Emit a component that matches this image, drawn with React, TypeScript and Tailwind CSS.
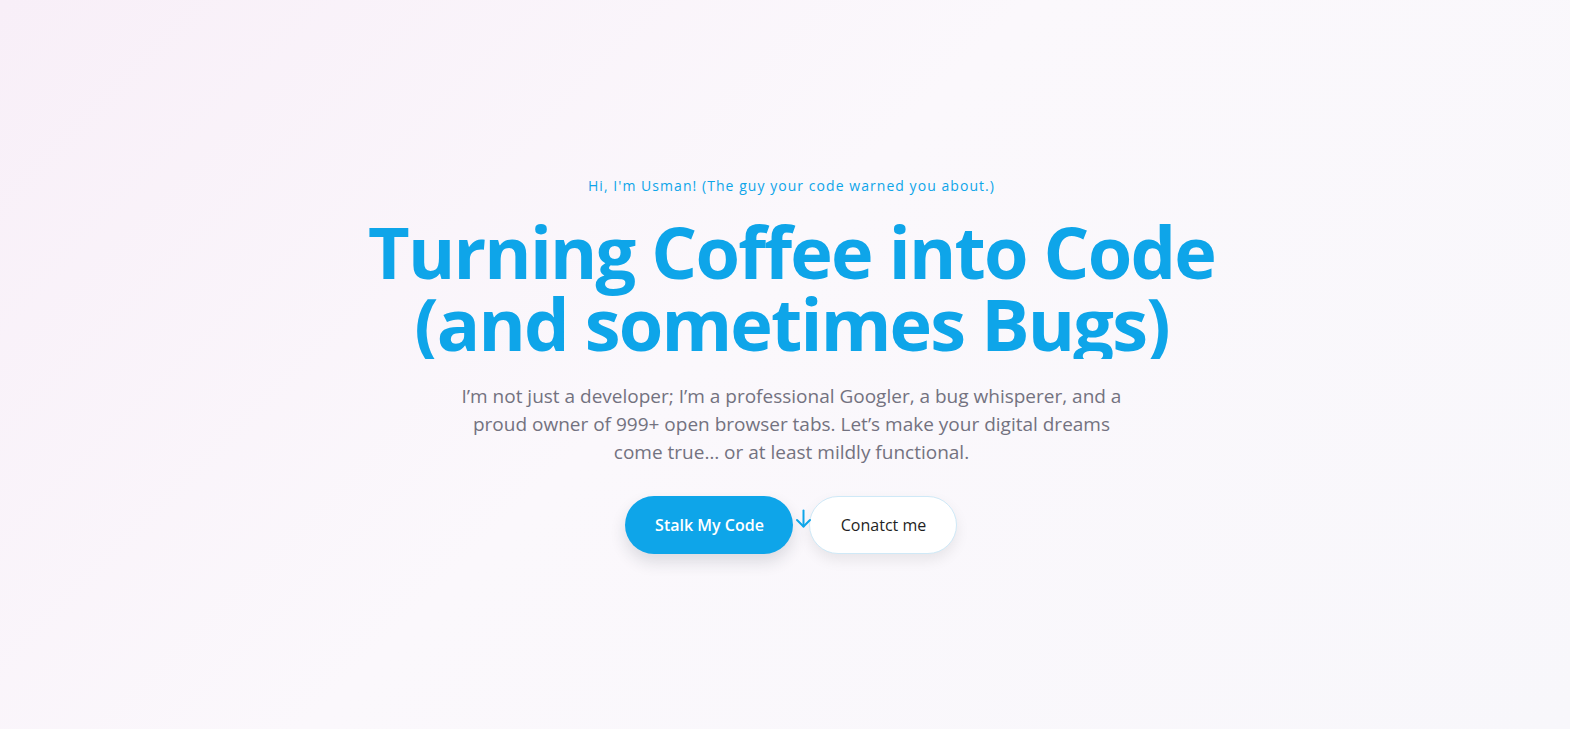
export default function App() {
  return (
    <div
      className="min-h-screen w-full flex flex-col items-center justify-center pl-[13px] bg-[linear-gradient(135deg,#f8eff8_0%,#fbf8fc_45%,#f8f7fb_100%)]"
      style={{ fontFamily: '"Open Sans", "Noto Sans", sans-serif' }}
    >
      <div className="flex flex-col items-center text-center">
        <p className="text-[14px] leading-5 tracking-[0.075em] text-[#0ea5e9] mb-[19px]">
          Hi, I'm Usman! (The guy your code warned you about.)
        </p>
        <h1 className="text-[72px] leading-[72px] font-bold text-[#0ea5e9] tracking-[-0.025em] h-[144px] overflow-hidden">
          Turning Coffee into Code
          <br />
          (and sometimes Bugs)
        </h1>
        <p className="mt-[23px] max-w-[672px] text-[19px] leading-[28px] text-[#737280]">
          I’m not just a developer; I’m a professional Googler, a bug whisperer, and a proud owner of 999+ open browser tabs. Let’s make your digital dreams come true… or at least mildly functional.
        </p>
        <div className="relative mt-[30px] flex items-center gap-4">
          <button className="h-[58px] w-[168px] rounded-full bg-[#0ea5e9] text-white text-[16px] font-semibold shadow-[0_8px_16px_rgba(30,40,60,0.14)]">
            Stalk My Code
          </button>
          <svg
            className="absolute left-[170px] top-[13px] w-[17px] h-[19px] text-[#0ea5e9] z-10"
            viewBox="0 0 17 19"
            fill="none"
            stroke="currentColor"
            strokeWidth="2"
            strokeLinecap="round"
            strokeLinejoin="round"
          >
            <path d="M8.5 1.5v16" />
            <path d="M2 11l6.5 6.5 6.5-6.5" />
          </svg>
          <button className="h-[58px] w-[148px] rounded-full bg-white border border-[#cfe9f7] text-[#1f1f24] text-[16px] font-medium shadow-[0_6px_14px_rgba(0,0,0,0.08)]">
            Conatct me
          </button>
        </div>
      </div>
    </div>
  );
}
